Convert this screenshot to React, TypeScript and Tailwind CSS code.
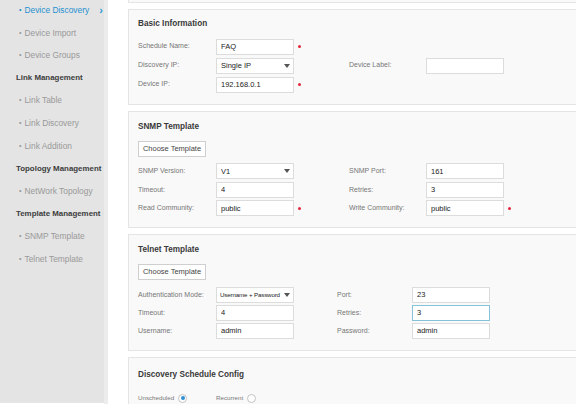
import React from "react";

const font = { fontFamily: '"Liberation Sans", Arial, sans-serif' };

type NavItem = { label: string; heading?: boolean; active?: boolean };

const nav: NavItem[] = [
  { label: "Device Discovery", active: true },
  { label: "Device Import" },
  { label: "Device Groups" },
  { label: "Link Management", heading: true },
  { label: "Link Table" },
  { label: "Link Discovery" },
  { label: "Link Addition" },
  { label: "Topology Management", heading: true },
  { label: "NetWork Topology" },
  { label: "Template Management", heading: true },
  { label: "SNMP Template" },
  { label: "Telnet Template" },
];

function Sidebar() {
  return (
    <aside className="flex h-full shrink-0">
      <div className="w-[104px] h-full bg-[#e4e4e4] flex flex-col -mt-[1px]">
        {nav.map((n) =>
          n.heading ? (
            <div key={n.label} className="h-[22.6px] flex items-center pl-[16px] text-[7.9px] font-bold text-[#3c3c3c] whitespace-nowrap">
              {n.label}
            </div>
          ) : (
            <div
              key={n.label}
              className={`h-[22.6px] flex items-center pl-[19px] text-[8.4px] whitespace-nowrap ${
                n.active ? "text-[#1e90d0]" : "text-[#999]"
              }`}
            >
              <span className="mr-[3px] text-[7px]">•</span>
              <span className="flex-1">{n.label}</span>
              {n.active && <span className="text-[11px] font-bold mr-[1px] text-[#2a9ad6] leading-none">›</span>}
            </div>
          )
        )}
      </div>
      <div className="w-[4px] h-full bg-[#ececec]" />
    </aside>
  );
}

function Caret() {
  return (
    <svg width="6" height="4" viewBox="0 0 6 4" className="shrink-0 ml-[1px]">
      <path d="M0 0h6L3 4z" fill="#555" />
    </svg>
  );
}

function Input({ value = "", focus = false, select = false, small = false }: { value?: string; focus?: boolean; select?: boolean; small?: boolean }) {
  return (
    <div
      className={`w-[78px] h-[16px] shrink-0 bg-white border flex items-center pr-[3px] text-[#222] ${
        small ? "text-[6.2px] tracking-[-0.15px] pl-[3px]" : "text-[7.5px] pl-[4px]"
      } ${focus ? "border-[#86c3db]" : "border-[#dcdcdc]"}`}
    >
      <span className="flex-1 whitespace-nowrap overflow-hidden">{value}</span>
      {select && <Caret />}
    </div>
  );
}

function Star({ show }: { show?: boolean }) {
  return (
    <span className="w-[4px] h-[3px] flex">
      {show && <span className="w-[3px] h-[3px] rounded-full bg-[#e0263a]" />}
    </span>
  );
}

type Field = { label: string; value?: string; select?: boolean; required?: boolean; focus?: boolean; small?: boolean };

function Row({ left, right, h, rightLabelW = "w-[77px]", gapW = "w-[47px]" }: { left: Field; right?: Field; h: string; rightLabelW?: string; gapW?: string }) {
  return (
    <div className={`flex items-center ${h}`}>
      <span className="w-[78px] shrink-0 text-[7px] text-[#777]">{left.label}</span>
      <Input value={left.value} select={left.select} focus={left.focus} small={left.small} />
      <span className="w-[4px]" />
      <Star show={left.required} />
      <span className={gapW} />
      {right && (
        <>
          <span className={`${rightLabelW} shrink-0 text-[7px] text-[#777]`}>{right.label}</span>
          <Input value={right.value} select={right.select} focus={right.focus} small={right.small} />
          <span className="w-[4px]" />
          <Star show={right.required} />
        </>
      )}
    </div>
  );
}

function Panel({ title, className, children }: { title: string; className: string; children?: React.ReactNode }) {
  return (
    <section className={`w-[470px] bg-[#f9f9f9] border border-[#e4e4e4] px-[9px] ${className}`}>
      <h2 className="h-[12px] flex items-center text-[8.2px] font-bold text-[#3a3a3a]">{title}</h2>
      {children}
    </section>
  );
}

function ChooseButton() {
  return (
    <button className="mt-[8px] h-[16px] w-[68px] bg-white border border-[#cfcfcf] text-[7.5px] text-[#444] flex items-center justify-center">
      Choose Template
    </button>
  );
}

function Radio({ checked }: { checked?: boolean }) {
  return (
    <span className="w-[9px] h-[9px] shrink-0 rounded-full border border-[#c4c4c4] bg-white flex items-center justify-center">
      {checked && <span className="w-[4px] h-[4px] rounded-full bg-[#2f8fd0]" />}
    </span>
  );
}

export default function App() {
  return (
    <div className="w-[576px] h-[404px] overflow-hidden flex bg-white" style={font}>
      <Sidebar />
      <main className="flex-1 pl-[20px] flex flex-col gap-[6px] overflow-hidden">
        <div className="w-[470px] h-[3px] shrink-0 bg-[#f9f9f9] border-b border-x border-[#e4e4e4]" />
        <Panel title="Basic Information" className="shrink-0 h-[96px] pt-[8px]">
          <div className="mt-[7px]">
            <Row h="h-[19px]" left={{ label: "Schedule Name:", value: "FAQ", required: true }} />
            <Row h="h-[19px]" left={{ label: "Discovery IP:", value: "Single IP", select: true }} right={{ label: "Device Label:", value: "" }} />
            <Row h="h-[19px]" left={{ label: "Device IP:", value: "192.168.0.1", required: true }} />
          </div>
        </Panel>
        <Panel title="SNMP Template" className="shrink-0 h-[117px] pt-[9px]">
          <ChooseButton />
          <div className="mt-[5px]">
            <Row h="h-[18.5px]" left={{ label: "SNMP Version:", value: "V1", select: true }} right={{ label: "SNMP Port:", value: "161" }} />
            <Row h="h-[18.5px]" left={{ label: "Timeout:", value: "4" }} right={{ label: "Retries:", value: "3" }} />
            <Row h="h-[18.5px]" left={{ label: "Read Community:", value: "public", required: true }} right={{ label: "Write Community:", value: "public", required: true }} />
          </div>
        </Panel>
        <Panel title="Telnet Template" className="shrink-0 h-[117px] pt-[9px]">
          <ChooseButton />
          <div className="mt-[6px]">
            <Row h="h-[18px]" gapW="w-[35px]" rightLabelW="w-[75px]" left={{ label: "Authentication Mode:", value: "Username + Password", select: true, small: true }} right={{ label: "Port:", value: "23" }} />
            <Row h="h-[18px]" gapW="w-[35px]" rightLabelW="w-[75px]" left={{ label: "Timeout:", value: "4" }} right={{ label: "Retries:", value: "3", focus: true }} />
            <Row h="h-[18px]" gapW="w-[35px]" rightLabelW="w-[75px]" left={{ label: "Username:", value: "admin" }} right={{ label: "Password:", value: "admin" }} />
          </div>
        </Panel>
        <Panel title="Discovery Schedule Config" className="shrink-0 h-[80px] pt-[11px]">
          <div className="mt-[6px] h-[22px] flex items-center text-[6.2px] text-[#777]">
            <span className="w-[40px] shrink-0">Unscheduled</span>
            <Radio checked />
            <span className="w-[29px] shrink-0" />
            <span className="w-[31px] shrink-0">Recurrent</span>
            <Radio />
          </div>
        </Panel>
      </main>
    </div>
  );
}
